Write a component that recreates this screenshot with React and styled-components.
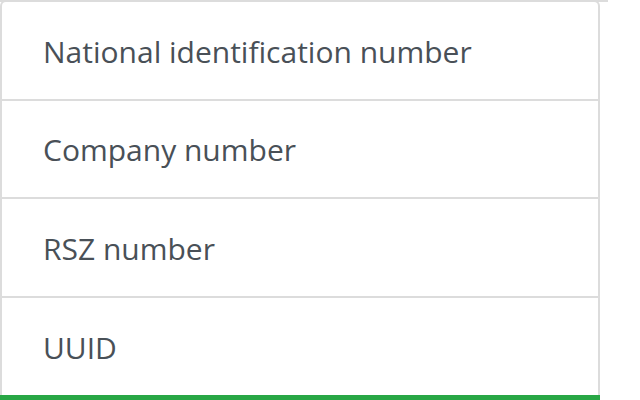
import styled, { createGlobalStyle } from 'styled-components';

const GlobalStyle = createGlobalStyle`
  html, body {
    margin: 0;
    padding: 0;
    background: #fff;
    overflow: hidden;
  }
`;

const items = [
  'National identification number',
  'Company number',
  'RSZ number',
  'UUID',
];

export default function App() {
  return (
    <>
      <GlobalStyle />
      <Page>
        <Menu>
          {items.map((label) => (
            <MenuItem key={label}>{label}</MenuItem>
          ))}
        </Menu>
        <SuccessBar />
      </Page>
    </>
  );
}

const Page = styled.div`
  width: 608px;
  border-top: 2px solid #dcdcdc;
`;

const Menu = styled.div`
  width: 600px;
  box-sizing: border-box;
  margin-top: -2px;
  border: 2px solid #dcdcdc;
  border-bottom: none;
  border-radius: 6px 6px 0 0;
  background: #fff;
  display: flex;
  flex-direction: column;
`;

const MenuItem = styled.div`
  height: 98.67px;
  box-sizing: border-box;
  display: flex;
  align-items: center;
  padding: 2px 0 0 41px;
  border-bottom: 2px solid #dcdcdc;
  font-family: 'Open Sans', 'Noto Sans', sans-serif;
  font-size: 30px;
  color: #495057;
  &:last-child {
    border-bottom: none;
    height: 96.67px;
  }
`;

const SuccessBar = styled.div`
  width: 600px;
  height: 8px;
  background: #28a745;
`;
